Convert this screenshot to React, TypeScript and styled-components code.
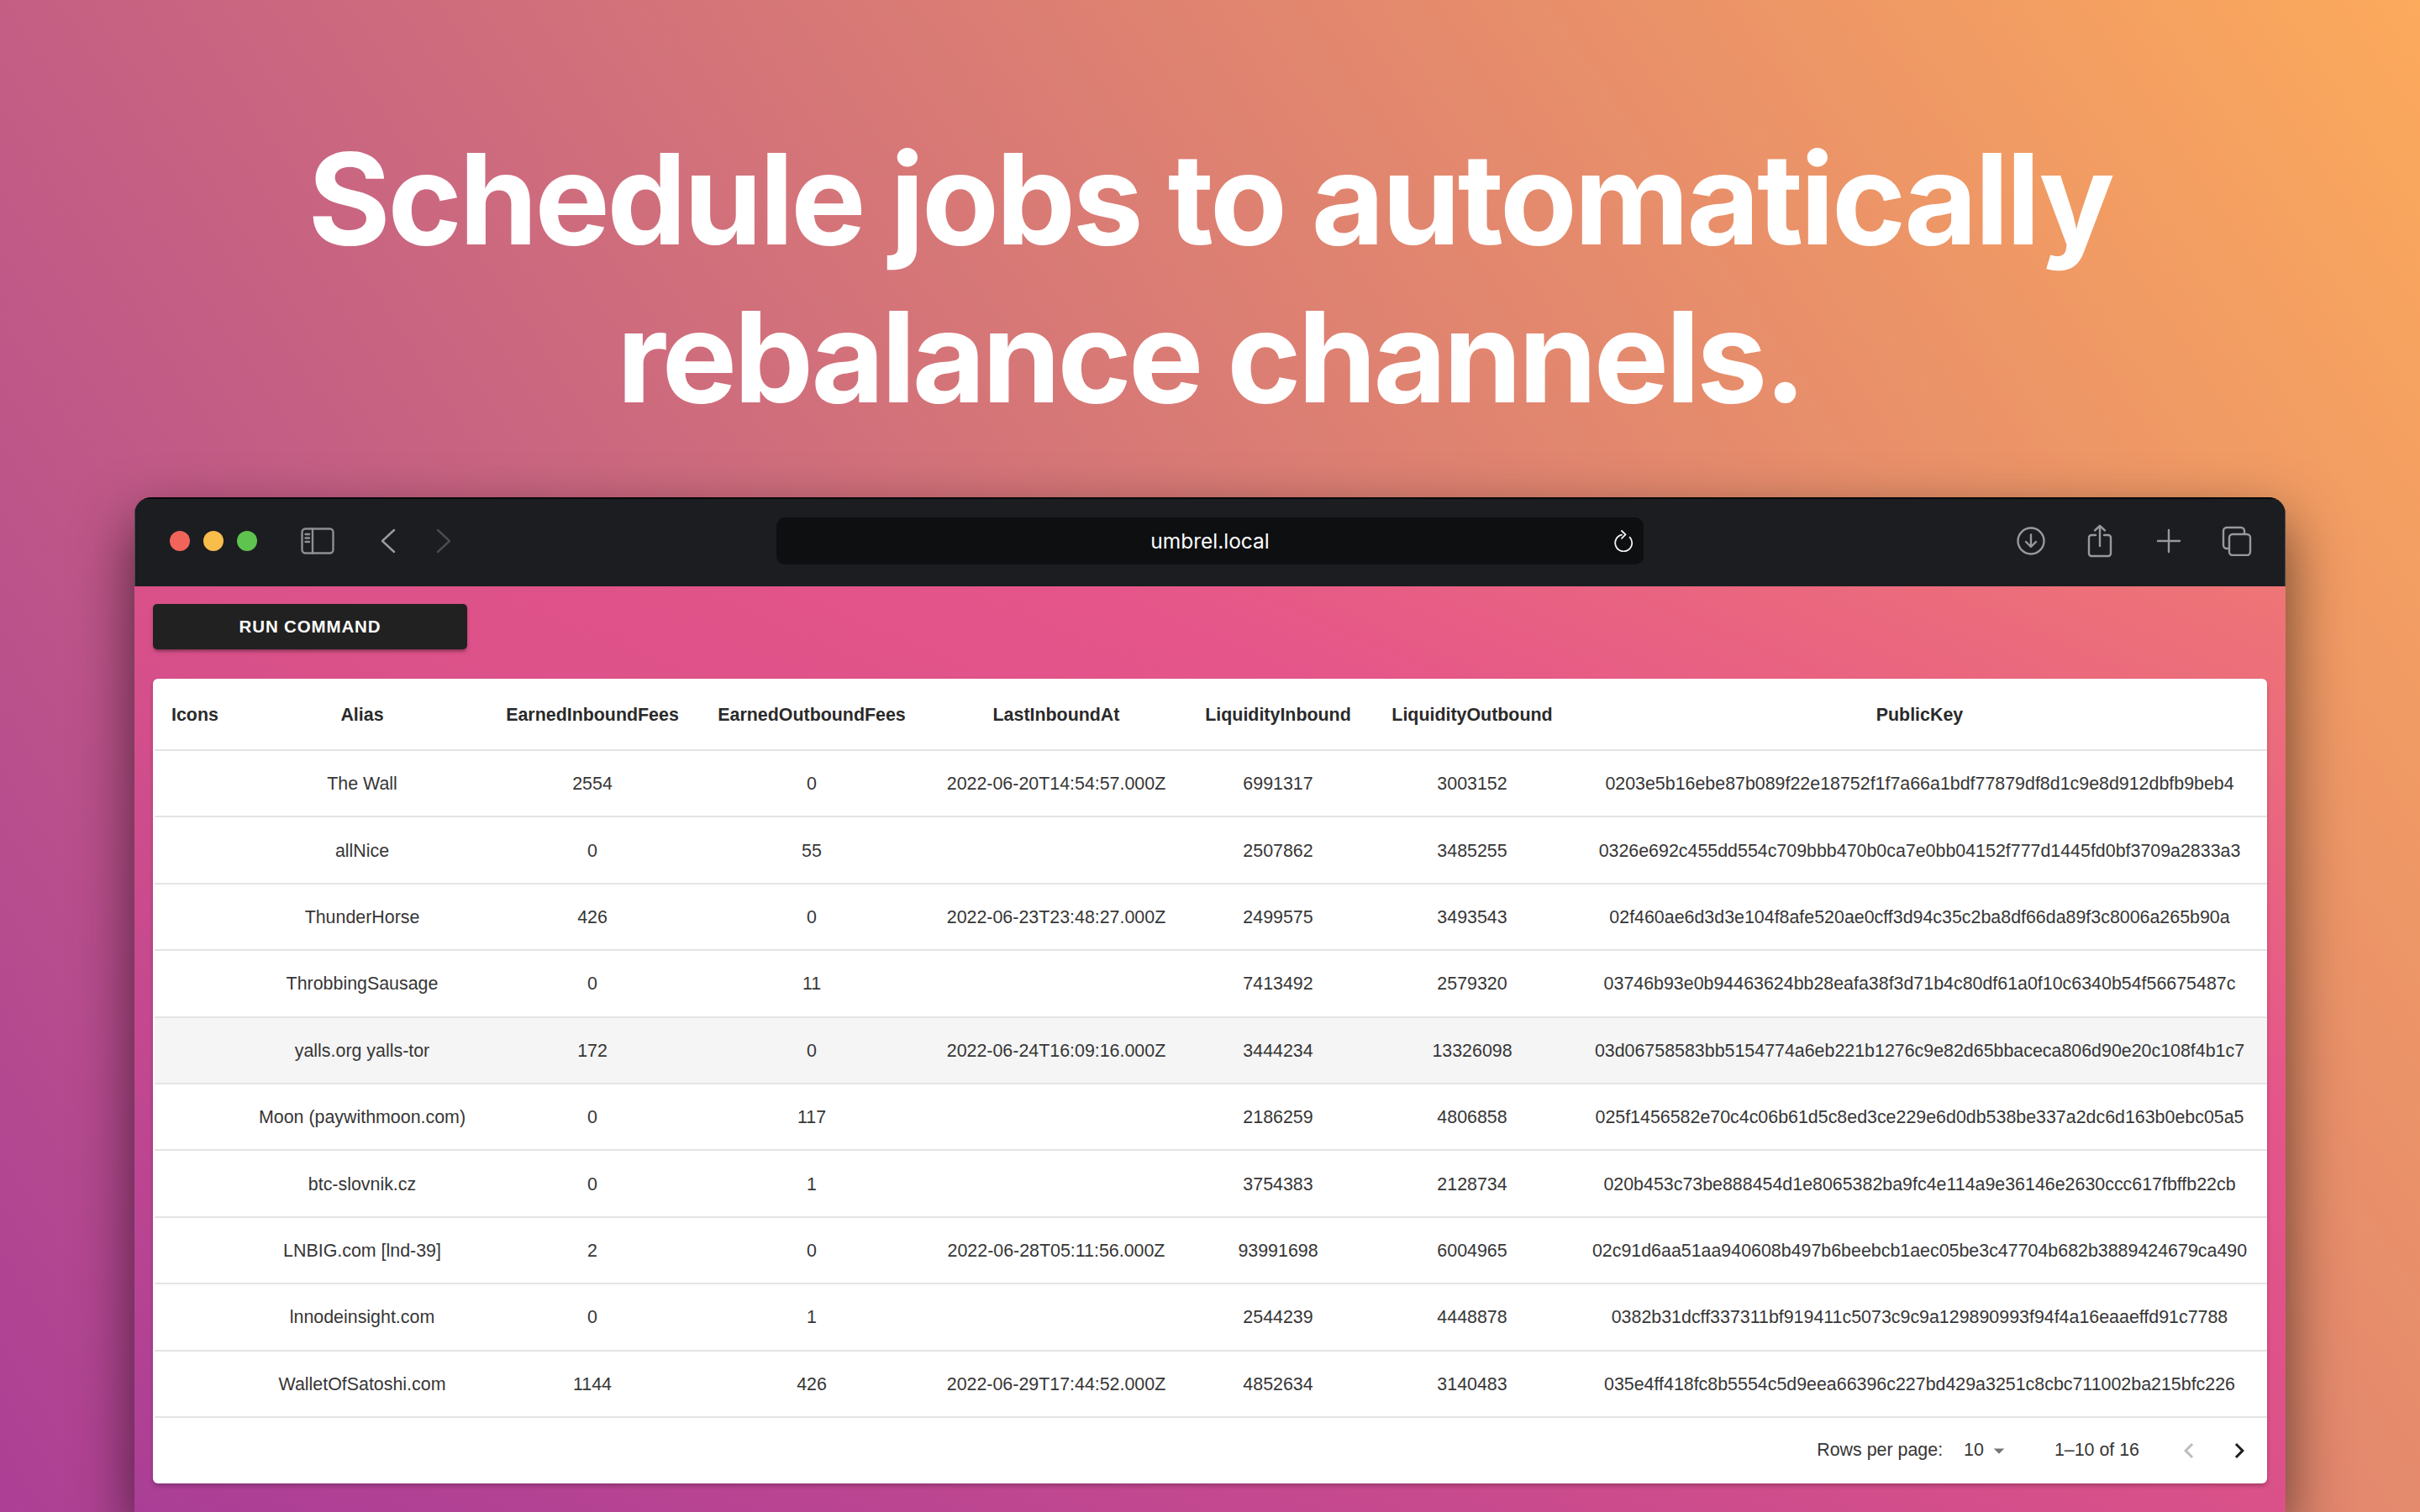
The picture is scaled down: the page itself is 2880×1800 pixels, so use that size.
import React from "react";
import styled, { createGlobalStyle } from "styled-components";

const Global = createGlobalStyle`
  html, body { margin: 0; padding: 0; width: 2880px; height: 1800px; overflow: hidden; }
  * { box-sizing: border-box; }
`;

const Page = styled.div`
  width: 2880px;
  height: 1800px;
  overflow: hidden;
  display: flex;
  flex-direction: column;
  background: linear-gradient(56deg, #ad3f95 0%, #fcaa5c 100%);
`;

const Headline = styled.h1`
  margin: 0;
  height: 592px;
  padding-top: 143px;
  text-align: center;
  font-family: Inter, "Liberation Sans", sans-serif;
  font-weight: 700;
  font-size: 150px;
  line-height: 188px;
  letter-spacing: -3.3px;
  color: #fff;
`;

const HeadlineTail = styled.span`
  letter-spacing: -3.8px;
`;

const Browser = styled.section`
  margin: 0 160px;
  flex: 1;
  display: flex;
  flex-direction: column;
  border-radius: 20px 20px 0 0;
  overflow: hidden;
  box-shadow: 0 30px 70px rgba(0, 0, 0, 0.6);
`;

const Toolbar = styled.header`
  height: 106px;
  flex: none;
  display: grid;
  grid-template-columns: 764px 1032px 1fr;
  align-items: center;
  padding-bottom: 4px;
  background: #1c1d21;
  border-top: 2px solid #08090a;
  box-shadow: inset 1px 0 0 #4a4b50, inset -1px 0 0 #4a4b50;
`;

const ToolLeft = styled.div`
  display: flex;
  align-items: center;
  padding-left: 42px;
`;

const Lights = styled.div`
  display: flex;
  gap: 16px;
  margin-right: 52px;
`;

const Light = styled.span<{ $c: string }>`
  width: 24px;
  height: 24px;
  border-radius: 50%;
  background: ${(p) => p.$c};
`;

const ToolIcon = styled.svg<{ $gap?: number }>`
  display: block;
  flex: none;
  fill: none;
  stroke-linecap: round;
  stroke-linejoin: round;
  margin-right: ${(p) => p.$gap ?? 0}px;
`;

const AddressBar = styled.div`
  height: 56px;
  border-radius: 10px;
  background: #0e0f11;
  color: #fff;
  display: flex;
  align-items: center;
  justify-content: center;
  position: relative;
  font-family: Inter, "Liberation Sans", sans-serif;
  font-size: 24.5px;
`;

const Reload = styled.svg`
  position: absolute;
  right: 11px;
  top: 15px;
  fill: none;
`;

const ToolRight = styled.div`
  display: flex;
  align-items: center;
  justify-content: flex-end;
  padding-right: 40px;
`;

const Content = styled.main`
  flex: 1;
  padding: 21px 22px 0;
  display: flex;
  flex-direction: column;
  align-items: flex-start;
  background: linear-gradient(to top right, #aa3e96 0%, #da5189 50%, #e5558a 72%, #ee7576 100%);
`;

const RunButton = styled.button`
  width: 374px;
  height: 54px;
  border: 0;
  border-radius: 5px;
  background: #212121;
  color: #fff;
  font-family: "Liberation Sans", Arial, sans-serif;
  font-weight: 700;
  font-size: 20.5px;
  letter-spacing: 0.85px;
  box-shadow: 0 4px 3px -2px rgba(0, 0, 0, 0.25), 0 3px 5px rgba(0, 0, 0, 0.16);
`;

const Card = styled.div`
  margin-top: 35px;
  width: 2516px;
  height: 958px;
  padding-left: 2px;
  background: #fff;
  border-radius: 6px;
  box-shadow: 0 3px 5px rgba(0, 0, 0, 0.22);
  font-family: "Liberation Sans", Arial, sans-serif;
  color: #363636;
  overflow: hidden;
`;

const Table = styled.table`
  width: 2514px;
  table-layout: fixed;
  border-collapse: collapse;
`;

const HeadRow = styled.tr`
  height: 85px;
  border-bottom: 2px solid #e4e4e4;
`;

const Row = styled.tr<{ $hl?: boolean }>`
  height: 79.4px;
  border-bottom: 2px solid #e4e4e4;
  background: ${(p) => (p.$hl ? "#f5f5f5" : "#fff")};
`;

const Th = styled.th<{ $left?: boolean }>`
  padding: 2px 0 0 ${(p) => (p.$left ? "20px" : "0")};
  text-align: ${(p) => (p.$left ? "left" : "center")};
  font-size: 21.4px;
  font-weight: 700;
  color: #2a2a2a;
  white-space: nowrap;
`;

const Td = styled.td`
  padding: 2px 0 0;
  text-align: center;
  font-size: 21.4px;
  white-space: nowrap;
`;

const Footer = styled.div`
  height: 78px;
  display: flex;
  align-items: center;
  justify-content: flex-end;
  font-size: 21.4px;
  color: #363636;
`;

const Select = styled.span`
  display: flex;
  align-items: center;
  margin: 0 51px 0 25px;
`;

const PagerIcon = styled.svg<{ $color: string; $left: number }>`
  display: block;
  flex: none;
  fill: ${(p) => p.$color};
  margin-left: ${(p) => p.$left}px;
`;

const FooterEnd = styled.span`
  width: 15px;
`;

const cols = [95, 304, 244, 278, 304, 224, 238, 827];
const heads = ["Icons", "Alias", "EarnedInboundFees", "EarnedOutboundFees", "LastInboundAt", "LiquidityInbound", "LiquidityOutbound", "PublicKey"];
const rows = [
  ["The Wall", "2554", "0", "2022-06-20T14:54:57.000Z", "6991317", "3003152", "0203e5b16ebe87b089f22e18752f1f7a66a1bdf77879df8d1c9e8d912dbfb9beb4"],
  ["allNice", "0", "55", "", "2507862", "3485255", "0326e692c455dd554c709bbb470b0ca7e0bb04152f777d1445fd0bf3709a2833a3"],
  ["ThunderHorse", "426", "0", "2022-06-23T23:48:27.000Z", "2499575", "3493543", "02f460ae6d3d3e104f8afe520ae0cff3d94c35c2ba8df66da89f3c8006a265b90a"],
  ["ThrobbingSausage", "0", "11", "", "7413492", "2579320", "03746b93e0b94463624bb28eafa38f3d71b4c80df61a0f10c6340b54f56675487c"],
  ["yalls.org yalls-tor", "172", "0", "2022-06-24T16:09:16.000Z", "3444234", "13326098", "03d06758583bb5154774a6eb221b1276c9e82d65bbaceca806d90e20c108f4b1c7"],
  ["Moon (paywithmoon.com)", "0", "117", "", "2186259", "4806858", "025f1456582e70c4c06b61d5c8ed3ce229e6d0db538be337a2dc6d163b0ebc05a5"],
  ["btc-slovnik.cz", "0", "1", "", "3754383", "2128734", "020b453c73be888454d1e8065382ba9fc4e114a9e36146e2630ccc617fbffb22cb"],
  ["LNBIG.com [lnd-39]", "2", "0", "2022-06-28T05:11:56.000Z", "93991698", "6004965", "02c91d6aa51aa940608b497b6beebcb1aec05be3c47704b682b3889424679ca490"],
  ["lnnodeinsight.com", "0", "1", "", "2544239", "4448878", "0382b31dcff337311bf919411c5073c9c9a129890993f94f4a16eaaeffd91c7788"],
  ["WalletOfSatoshi.com", "1144", "426", "2022-06-29T17:44:52.000Z", "4852634", "3140483", "035e4ff418fc8b5554c5d9eea66396c227bd429a3251c8cbc711002ba215bfc226"],
];

export default function App() {
  return (
    <Page>
      <Global />
      <Headline>
        Schedule jobs to automatically
        <br />
        <HeadlineTail>rebalance channels.</HeadlineTail>
      </Headline>
      <Browser>
        <Toolbar>
          <ToolLeft>
            <Lights>
              <Light $c="#f0645a" />
              <Light $c="#f9bd4b" />
              <Light $c="#5ec44f" />
            </Lights>
            <ToolIcon width="40" height="32" viewBox="0 0 40 32" stroke="#8e8f92" strokeWidth="2.4" $gap={55}>
              <rect x="1.5" y="1.5" width="37" height="29" rx="4" />
              <path d="M14 1.5v29M5.5 8h4.5M5.5 12.5h4.5M5.5 17h4.5" />
            </ToolIcon>
            <ToolIcon width="18" height="30" viewBox="0 0 18 30" stroke="#9a9b9e" strokeWidth="2.4" $gap={48}>
              <path d="M16 2 2 15l14 13" />
            </ToolIcon>
            <ToolIcon width="18" height="30" viewBox="0 0 18 30" stroke="#4a4b4f" strokeWidth="2.4">
              <path d="M2 2l14 13L2 28" />
            </ToolIcon>
          </ToolLeft>
          <AddressBar>
            umbrel.local
            <Reload width="24" height="26" viewBox="0 0 24 26" stroke="#f2f2f2" strokeWidth="1.8" strokeLinecap="round" strokeLinejoin="round">
              <path d="M9 5.6a10 10 0 1 0 9.6 3" />
              <path d="M9 1l4.5 4.4L9 9.8" />
            </Reload>
          </AddressBar>
          <ToolRight>
            <ToolIcon width="34" height="34" viewBox="0 0 34 34" stroke="#98999c" strokeWidth="2.4" $gap={50}>
              <circle cx="17" cy="17" r="15.5" />
              <path d="M17 9.5v14M11 18l6 6 6-6" />
            </ToolIcon>
            <ToolIcon width="30" height="40" viewBox="0 0 30 40" stroke="#98999c" strokeWidth="2.4" $gap={52}>
              <path d="M10 13H5a3 3 0 0 0-3 3v19a3 3 0 0 0 3 3h20a3 3 0 0 0 3-3V16a3 3 0 0 0-3-3h-5" />
              <path d="M15 26V2M9 7.5 15 2l6 5.5" />
            </ToolIcon>
            <ToolIcon width="30" height="30" viewBox="0 0 30 30" stroke="#98999c" strokeWidth="2.4" $gap={48}>
              <path d="M15 2v26M2 15h26" />
            </ToolIcon>
            <ToolIcon width="36" height="36" viewBox="0 0 36 36" stroke="#98999c" strokeWidth="2.4">
              <path d="M8 27H6a4 4 0 0 1-4-4V6a4 4 0 0 1 4-4h17a4 4 0 0 1 4 4v3" />
              <rect x="9" y="10" width="25" height="25" rx="4" />
            </ToolIcon>
          </ToolRight>
        </Toolbar>
        <Content>
          <RunButton>RUN COMMAND</RunButton>
          <Card>
            <Table>
              <colgroup>
                {cols.map((w, i) => (
                  <col key={i} width={w} />
                ))}
              </colgroup>
              <thead>
                <HeadRow>
                  {heads.map((h, i) => (
                    <Th key={h} $left={i === 0}>
                      {h}
                    </Th>
                  ))}
                </HeadRow>
              </thead>
              <tbody>
                {rows.map((r, i) => (
                  <Row key={r[0]} $hl={i === 4}>
                    <Td />
                    {r.map((c, j) => (
                      <Td key={j}>{c}</Td>
                    ))}
                  </Row>
                ))}
              </tbody>
            </Table>
            <Footer>
              Rows per page:
              <Select>
                10
                <PagerIcon width="30" height="30" viewBox="0 0 24 24" $color="#757575" $left={3}>
                  <path d="M7 10l5 5 5-5z" />
                </PagerIcon>
              </Select>
              1–10 of 16
              <PagerIcon width="36" height="36" viewBox="0 0 24 24" $color="#bdbdbd" $left={41}>
                <path d="M15.41 7.41 14 6l-6 6 6 6 1.41-1.41L10.83 12z" />
              </PagerIcon>
              <PagerIcon width="36" height="36" viewBox="0 0 24 24" $color="#1f1f1f" $left={24}>
                <path d="M10 6 8.59 7.41 13.17 12l-4.58 4.59L10 18l6-6z" />
              </PagerIcon>
              <FooterEnd />
            </Footer>
          </Card>
        </Content>
      </Browser>
    </Page>
  );
}
